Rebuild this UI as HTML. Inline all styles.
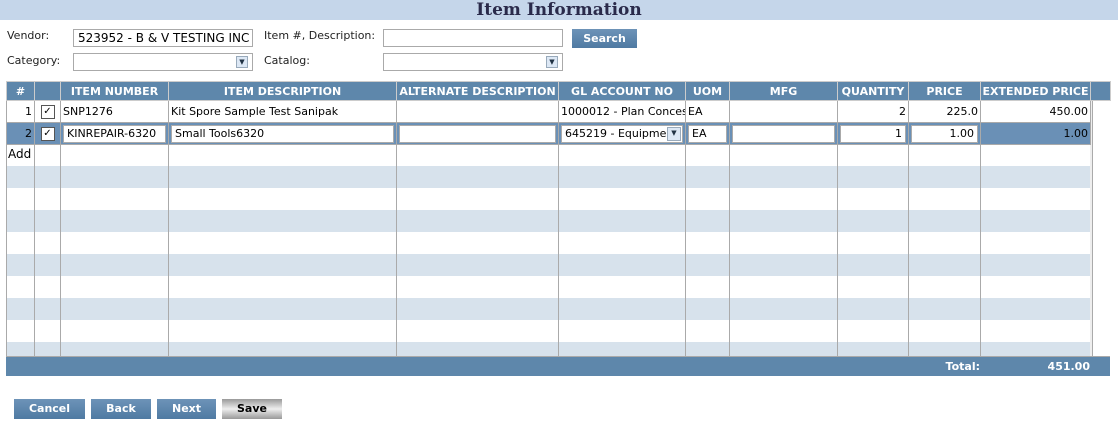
<!DOCTYPE html><html><head><style>
body{margin:0;width:1118px;height:430px;background:#fff;font-family:Verdana,"DejaVu Sans",sans-serif;font-size:12px;position:relative;overflow:hidden}
.a{position:absolute}
.lbl{font-size:11px;color:#222}
.inp{position:absolute;border:1px solid #aaa;background:#fff;box-sizing:border-box;font-size:12px;padding:2px 4px;white-space:nowrap;overflow:hidden}
.dd{position:absolute;width:12px;height:12px;background:#dde8f5;border:1px solid #9ab;box-sizing:border-box;font-size:7px;text-align:center;line-height:11px;color:#234}
.btn{position:absolute;height:20px;color:#fff;font-weight:bold;font-size:11px;text-align:center;line-height:20px;background:linear-gradient(#6d93b8,#4f7aa2);}
table{border-collapse:collapse;position:absolute;left:6px;top:81px;table-layout:fixed;width:1104px}
td,th{border:1px solid #aaa;height:22px;padding:0 2px;font-size:11px;white-space:nowrap;overflow:hidden;box-sizing:border-box}
th{background:#5e87ab;color:#fff;font-weight:bold;height:19px;border-color:#ccc;padding:0}
.r{text-align:right}
.hl td{background:#6a90b6}
.ci{display:block;border:1px solid #aaa;background:#fff;height:18px;box-sizing:border-box;padding:1px 3px;color:#000;overflow:hidden}
.cb{display:inline-block;width:12px;height:12px;border:1px solid #555;background:#fff;font-size:10px;line-height:12px;text-align:center;vertical-align:middle}
.v{position:absolute;top:0;width:1px;height:212px;background:#aaa}
</style></head><body>
<div class="a" style="left:0;top:0;width:1118px;height:20px;background:#c5d6ea"></div>
<div class="a" style="left:0;top:-1px;width:1118px;text-align:center;font:bold 17px 'DejaVu Serif',serif;color:#2a2a4a;line-height:22px">Item Information</div>
<div class="a lbl" style="left:7px;top:29px">Vendor:</div>
<div class="inp" style="left:73px;top:29px;width:180px;height:18px;padding:1px 4px">523952 - B &amp; V TESTING INC</div>
<div class="a lbl" style="left:264px;top:29px">Item #, Description:</div>
<div class="inp" style="left:383px;top:29px;width:180px;height:18px"></div>
<div class="btn" style="left:572px;top:29px;width:65px;height:19px;line-height:19px">Search</div>
<div class="a lbl" style="left:7px;top:54px">Category:</div>
<div class="inp" style="left:73px;top:53px;width:180px;height:18px"></div><div class="dd" style="left:236px;top:56px">▼</div>
<div class="a lbl" style="left:264px;top:54px">Catalog:</div>
<div class="inp" style="left:383px;top:53px;width:180px;height:18px"></div><div class="dd" style="left:546px;top:56px">▼</div>
<div class="a" style="left:6px;top:144px;width:1084px;height:212px;background:repeating-linear-gradient(#fff 0 22px,#d7e2ec 22px 44px)"></div>
<div class="a" style="left:1090px;top:100px;width:2px;height:256px;background:#eee;border-right:1px solid #aaa"></div>
<div class="a" style="left:6px;top:144px;width:1084px;height:212px">
<div class="v" style="left:0"></div><div class="v" style="left:28px"></div><div class="v" style="left:54px"></div><div class="v" style="left:162px"></div><div class="v" style="left:390px"></div><div class="v" style="left:552px"></div><div class="v" style="left:679px"></div><div class="v" style="left:723px"></div><div class="v" style="left:831px"></div><div class="v" style="left:902px"></div><div class="v" style="left:974px"></div>
</div>
<table>
<colgroup><col style="width:28px"><col style="width:26px"><col style="width:108px"><col style="width:228px"><col style="width:162px"><col style="width:127px"><col style="width:44px"><col style="width:108px"><col style="width:71px"><col style="width:72px"><col style="width:110px"><col style="width:20px"></colgroup>
<tr><th>#</th><th></th><th>ITEM NUMBER</th><th>ITEM DESCRIPTION</th><th>ALTERNATE DESCRIPTION</th><th>GL ACCOUNT NO</th><th>UOM</th><th>MFG</th><th>QUANTITY</th><th>PRICE</th><th>EXTENDED PRICE</th><th></th></tr>
<tr><td class="r">1</td><td style="text-align:center"><span class="cb">✓</span></td><td>SNP1276</td><td>Kit Spore Sample Test Sanipak</td><td></td><td>1000012 - Plan Conces</td><td>EA</td><td></td><td class="r">2</td><td class="r">225.0</td><td class="r">450.00</td><td style="border:none;background:transparent"></td></tr>
<tr class="hl"><td class="r">2</td><td style="text-align:center"><span class="cb">✓</span></td><td><span class="ci">KINREPAIR-6320</span></td><td><span class="ci">Small Tools6320</span></td><td><span class="ci"></span></td><td><span class="ci" style="position:relative">645219 - Equipme<span class="dd" style="right:1px;top:1px;width:14px;height:14px">▼</span></span></td><td><span class="ci">EA</span></td><td><span class="ci"></span></td><td><span class="ci r">1</span></td><td><span class="ci r">1.00</span></td><td class="r">1.00</td><td style="border:none;background:transparent"></td></tr>
</table>
<div class="a" style="left:8px;top:147px;font-size:12px">Add</div>
<div class="a" style="left:6px;top:356px;width:1104px;height:20px;background:#5e87ab;border-top:1px solid #aaa;box-sizing:border-box"></div>
<div class="a" style="left:900px;top:360px;width:80px;text-align:right;color:#fff;font-weight:bold;font-size:11px">Total:</div>
<div class="a" style="left:980px;top:360px;width:110px;text-align:right;color:#fff;font-weight:bold;font-size:11px">451.00</div>
<div class="btn" style="left:14px;top:399px;width:71px">Cancel</div>
<div class="btn" style="left:91px;top:399px;width:60px">Back</div>
<div class="btn" style="left:157px;top:399px;width:59px">Next</div>
<div class="btn" style="left:222px;top:399px;width:60px;color:#000;background:linear-gradient(#999,#eee 50%,#999)">Save</div>
</body></html>
